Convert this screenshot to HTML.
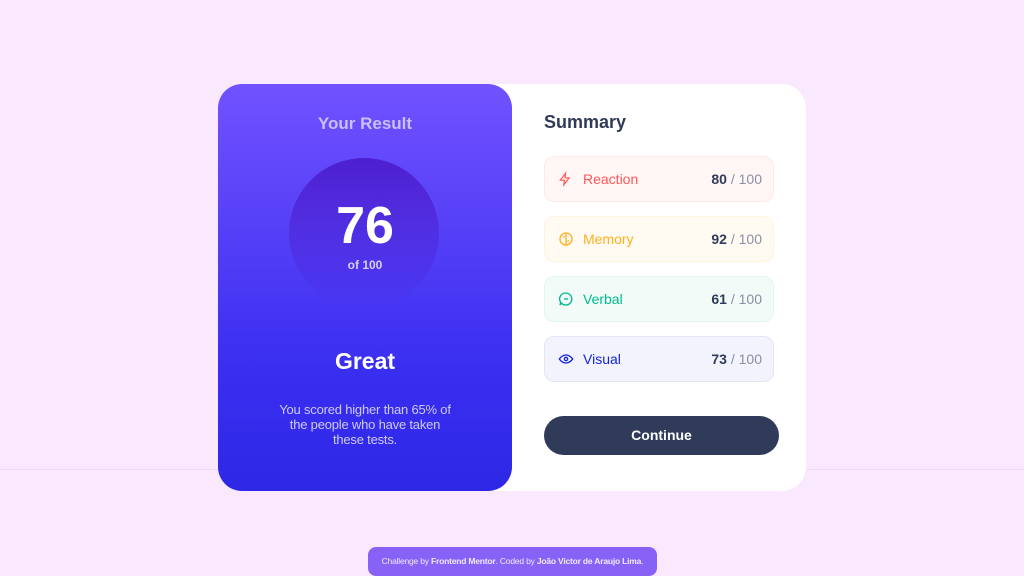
<!DOCTYPE html><html><head><style>
body{margin:0;width:1024px;height:576px;background:#f9e8fe;font-family:"Liberation Sans",sans-serif;position:relative;overflow:hidden}
.line{position:absolute;left:0;right:0;top:469px;height:1px;background:#efdcf6}
.card{position:absolute;left:218px;top:84px;width:588px;height:407px;background:#fff;border-radius:24px}
.left{position:absolute;left:0;top:0;width:294px;height:407px;border-radius:24px;background:linear-gradient(#7152ff,#3a2ef0 70%,#2d28e6)}
.t{position:absolute;width:100%;text-align:center}
.circ{position:absolute;left:71px;top:74px;width:150px;height:150px;border-radius:50%;background:linear-gradient(#4c1fcf,rgba(70,40,230,0))}
.row{position:absolute;left:326px;width:228px;height:44px;border-radius:10px;font-size:14px;border:1px solid}
.row svg{position:absolute;left:13px;top:14px}
.row .n{position:absolute;left:38px;top:14px}
.row .s{position:absolute;right:11px;top:14px;color:#8a8fa3}
.row .s b{color:#303b5a}
.btn{position:absolute;left:326px;top:332px;width:235px;height:39px;border-radius:20px;background:#303b5a;color:#fff;text-align:center;line-height:39px;font-weight:bold;font-size:14px}
.foot{position:absolute;left:368px;top:547px;width:289px;height:29px;border-radius:8px;background:#8862f6;color:#f0eaff;font-size:8.5px;text-align:center;line-height:29px;letter-spacing:-0.2px}
</style></head><body>
<div class="line"></div>
<div class="card">
<div class="left">
<div class="t" style="top:30px;color:#c8c0ff;font-size:17px;font-weight:bold">Your Result</div>
<div class="circ"></div>
<div class="t" style="top:112px;color:#fff;font-size:52px;font-weight:bold">76</div>
<div class="t" style="top:174px;color:#d6d0ff;font-size:12px;font-weight:bold">of 100</div>
<div class="t" style="top:264px;color:#fff;font-size:23px;font-weight:bold">Great</div>
<div class="t" style="top:318px;left:0;color:#cfcaff;font-size:13px;line-height:15px;letter-spacing:-0.2px">You scored higher than 65% of<br>the people who have taken<br>these tests.</div>
</div>
<div style="position:absolute;left:326px;top:28px;font-size:18px;font-weight:bold;color:#303b5a">Summary</div>
<div class="row" style="top:72px;background:#fff6f5;border-color:#ffe9e9;color:#ff5757"><svg width="14" height="16" viewBox="0 0 24 24" fill="none" stroke="#ff5757" stroke-width="2"><path d="M13 2L4 14h7l-1 8 9-12h-7z"/></svg><span class="n">Reaction</span><span class="s"><b>80</b> / 100</span></div>
<div class="row" style="top:132px;background:#fffbf3;border-color:#fff3dd;color:#ffb01f"><svg width="16" height="16" viewBox="0 0 24 24" fill="none" stroke="#ffb01f" stroke-width="2"><circle cx="12" cy="12" r="9"/><path d="M12 3v18M7 9h3M14 15h3"/></svg><span class="n">Memory</span><span class="s"><b>92</b> / 100</span></div>
<div class="row" style="top:192px;background:#f2fbf8;border-color:#e0f6ee;color:#00bb8f"><svg width="16" height="16" viewBox="0 0 24 24" fill="none" stroke="#00bb8f" stroke-width="2"><path d="M12 3a9 9 0 1 1-7 15l-2 3 1-4A9 9 0 0 1 12 3z"/><path d="M9 12h6"/></svg><span class="n">Verbal</span><span class="s"><b>61</b> / 100</span></div>
<div class="row" style="top:252px;background:#f3f3fd;border-color:#e4e4f9;color:#1125d6"><svg width="16" height="16" viewBox="0 0 24 24" fill="none" stroke="#1125d6" stroke-width="2"><path d="M2 12s4-6 10-6 10 6 10 6-4 6-10 6S2 12 2 12z"/><circle cx="12" cy="12" r="2.5"/></svg><span class="n">Visual</span><span class="s"><b>73</b> / 100</span></div>
<div class="btn">Continue</div>
</div>
<div class="foot">Challenge by <b>Frontend Mentor</b>. Coded by <b>João Victor de Araujo Lima</b>.</div>
</body></html>
